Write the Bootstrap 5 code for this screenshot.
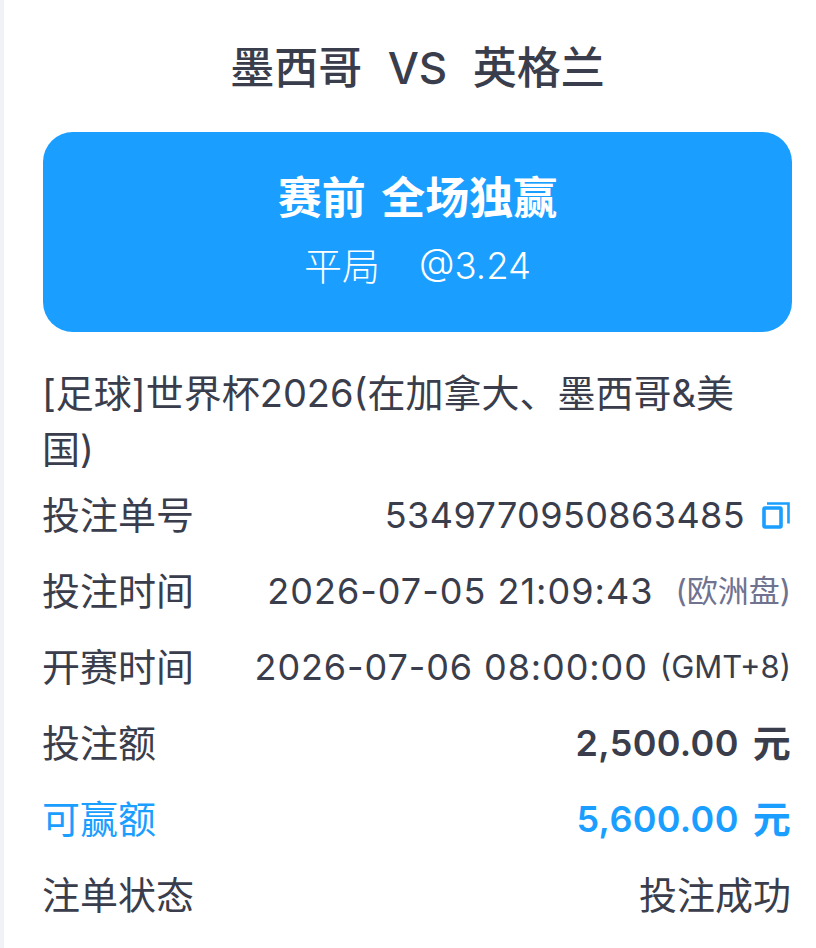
<!DOCTYPE html>
<html lang="zh-CN">
  <head>
    <meta charset="UTF-8" />
    <meta name="viewport" content="width=device-width, initial-scale=1" />
    <title>注单详情</title>
    <link href="https://cdn.jsdelivr.net/npm/bootstrap@5.3.0/dist/css/bootstrap.min.css" rel="stylesheet" />
    <style>
      html, body { height: 100%; margin: 0; }
      body {
        background: #fff;
        border-left: 4px solid #f1f1f8;
        color: #3a3d4b;
        font-family: Inter, "Noto Sans CJK SC", sans-serif;
        overflow: hidden;
      }
      .sheet { padding: 36px 24px 0 39px; }
      .match-title { font-size: 44px; line-height: 64px; font-weight: 500; margin: 0 0 32px; word-spacing: 1px; }
      .bet-card { background: #1a9eff; border-radius: 30px; height: 200px; color: #fff; padding-top: 40px; }
      .bet-name { font-size: 44px; line-height: 52px; font-weight: 700; word-spacing: 5px; }
      .bet-pick { font-size: 38px; line-height: 52px; margin-top: 16px; font-weight: 300; }
      .bet-odds { font-size: 36.5px; margin-left: 39px; }
      .league { font-size: 38px; line-height: 56px; margin: 33px 0 0 -1px; max-width: 700px; }
      .info-row { height: 76px; font-size: 38px; line-height: 76px; white-space: nowrap; margin-left: -1px; padding-right: 1px; }
      .num { font-size: 36px; letter-spacing: 1px; }
      .num-tight { letter-spacing: .9px; }
      .num-id { font-size: 36px; letter-spacing: .4px; }
      .note { font-size: 31px; color: #6f7390; margin-left: 22px; }
      .note-gmt { font-size: 31px; margin-left: 12px; }
      .amount { font-size: 36px; font-weight: 600; letter-spacing: .3px; }
      .amount-unit { font-size: 38px; margin-left: 14px; }
      .win { color: #1a9eff; }
      .copy-icon { margin-left: 17px; margin-right: 1px; }
    </style>
  </head>
  <body>
    <div class="sheet">
      <h1 class="match-title text-center">墨西哥 &nbsp;VS&nbsp; 英格兰</h1>

      <div class="bet-card text-center">
        <div class="bet-name">赛前 全场独赢</div>
        <div class="bet-pick d-flex justify-content-center"><span>平局</span><span class="bet-odds">@3.24</span></div>
      </div>

      <p class="league">[足球]世界杯2026(在加拿大、墨西哥&amp;美国)</p>

      <div class="info-row d-flex justify-content-between">
        <span>投注单号</span>
        <span class="d-flex align-items-center">
          <span class="num-id">5349770950863485</span>
          <svg class="copy-icon" width="28" height="27" viewBox="0 0 28 27" fill="none" stroke="#1a9eff">
            <rect x="2" y="6" width="17" height="19" rx="1" stroke-width="3.6" />
            <path d="M5 1.5h21.500v20" stroke-width="2.600" />
          </svg>
        </span>
      </div>
      <div class="info-row d-flex justify-content-between">
        <span>投注时间</span>
        <span class="d-flex"><span class="num">2026-07-05 21:09:43</span><span class="note">(欧洲盘)</span></span>
      </div>
      <div class="info-row d-flex justify-content-between">
        <span>开赛时间</span>
        <span class="d-flex"><span class="num num-tight">2026-07-06 08:00:00</span><span class="note-gmt">(GMT+8)</span></span>
      </div>
      <div class="info-row d-flex justify-content-between">
        <span>投注额</span>
        <span class="amount d-flex"><span>2,500.00</span><span class="amount-unit">元</span></span>
      </div>
      <div class="info-row win d-flex justify-content-between">
        <span>可赢额</span>
        <span class="amount d-flex"><span>5,600.00</span><span class="amount-unit">元</span></span>
      </div>
      <div class="info-row d-flex justify-content-between">
        <span>注单状态</span>
        <span>投注成功</span>
      </div>
    </div>
    <script src="https://cdn.jsdelivr.net/npm/bootstrap@5.3.0/dist/js/bootstrap.bundle.min.js"></script>
  </body>
</html>
